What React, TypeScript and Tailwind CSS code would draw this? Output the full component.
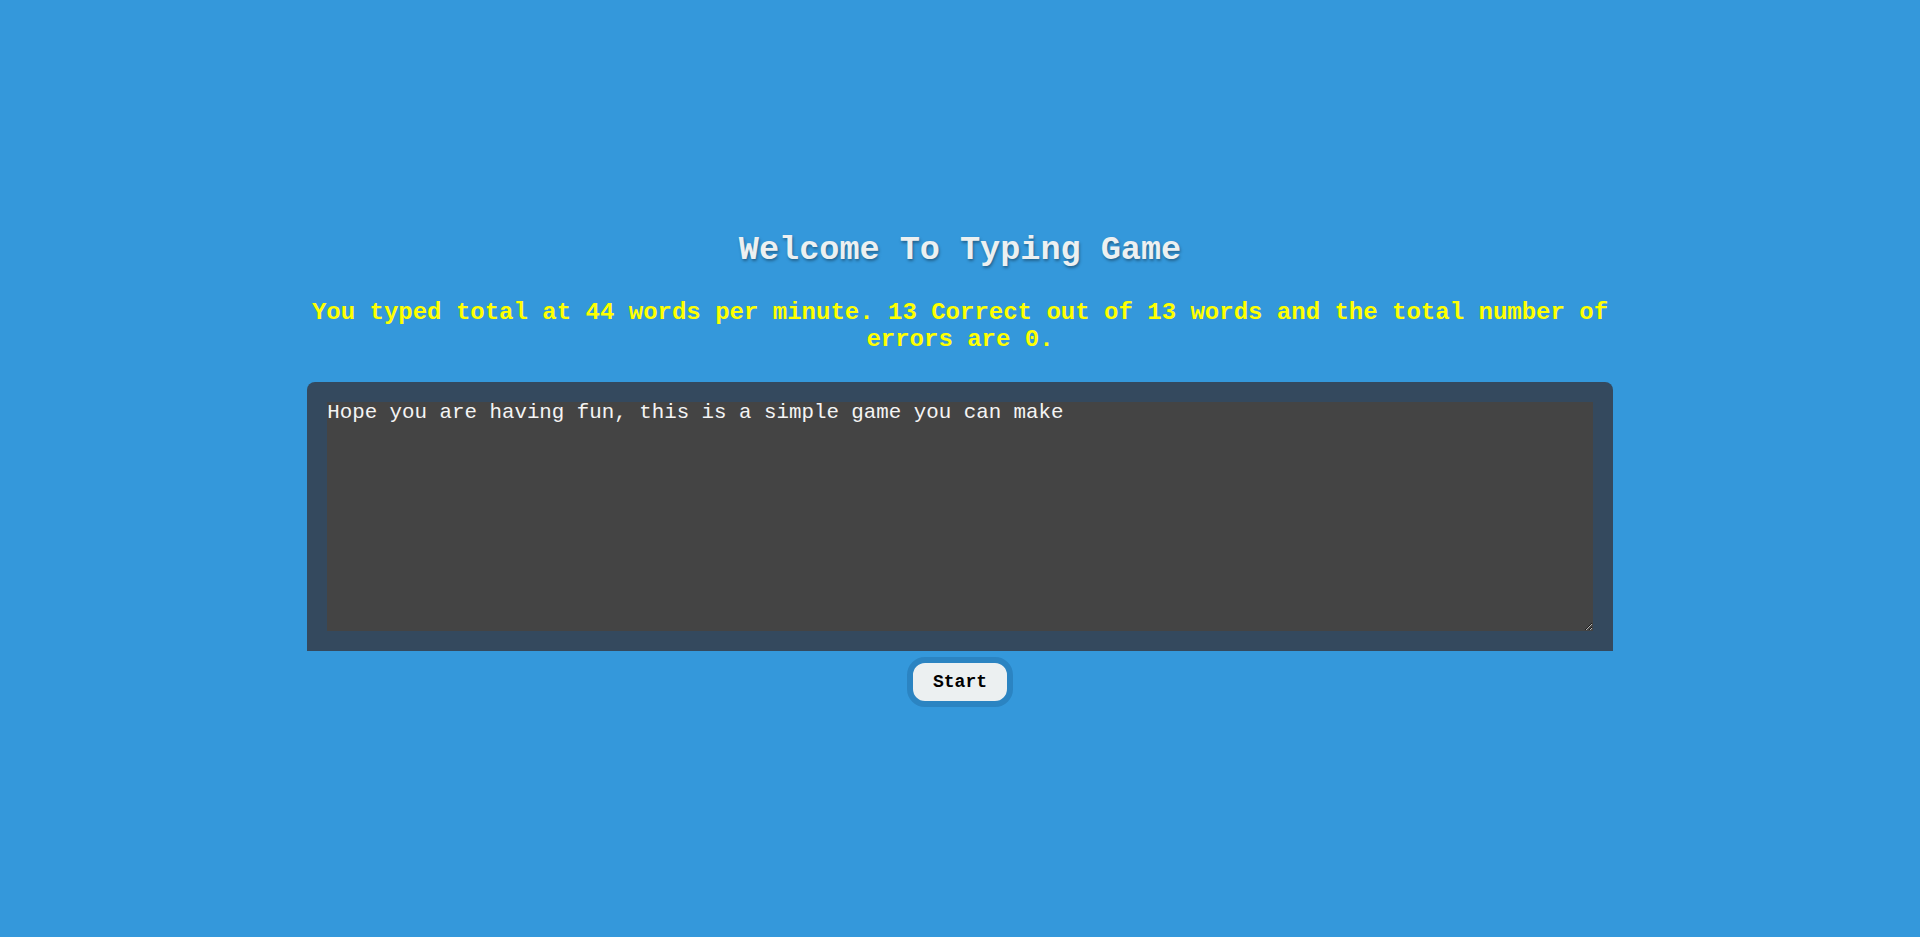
import { useState } from 'react'

export default function App() {
  const [text, setText] = useState('Hope you are having fun, this is a simple game you can make')

  return (
    <div className="min-h-screen w-full bg-[#3498db] flex items-center justify-center font-['Liberation_Mono','Courier_New',monospace]">
      <div className="w-[68%] flex flex-col items-center">
        {/* Heading */}
        <h1 className="text-[33.5px] leading-[40px] font-bold text-[#ecf0f1] [text-shadow:1px_2px_3px_rgba(0,0,0,0.35)]">
          Welcome To Typing Game
        </h1>

        {/* Result message */}
        <h2 className="mt-[29px] w-full text-center text-[24px] leading-[27px] font-bold text-[#ffff00]">
          You typed total at 44 words per minute. 13 Correct out of 13 words and the total number of errors are 0.
        </h2>

        {/* Typing area */}
        <div className="mt-[29px] w-full bg-[#34495e] rounded-t-lg p-5">
          <textarea
            value={text}
            onChange={(e) => setText(e.target.value)}
            className="block w-full h-[229px] p-0 border-0 outline-none bg-[#444444] text-[#f4f4f4] text-[20.8px] leading-[22px] font-['Liberation_Mono','Courier_New',monospace]"
          />
        </div>

        <button className="mt-[6px] w-[106px] h-[50px] rounded-[18px] border-[6px] border-[#2b84c2] bg-[#ecf0f1] text-black text-[18px] font-bold">
          Start
        </button>
      </div>
    </div>
  )
}
